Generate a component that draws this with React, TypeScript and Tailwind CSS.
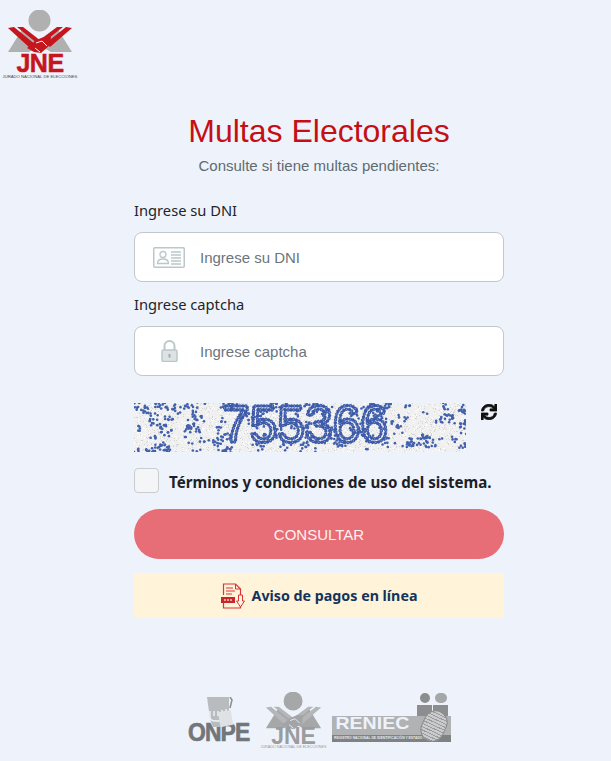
import { FaSync } from "react-icons/fa";

// small seeded random so the captcha noise stays the same on every render
function makeRandom(seed: number) {
    let s = seed;
    return () => {
        s = (s * 16807) % 2147483647;
        return s / 2147483647;
    };
}

const rand = makeRandom(4217);

const grain = Array.from({ length: 2600 }, () => ({
    x: Math.floor(rand() * 332),
    y: Math.floor(rand() * 49),
    shade: rand() > 0.5 ? "#d4d4d4" : "#ffffff",
}));

const noise = Array.from({ length: 150 }, () => {
    const cx = rand() * 332;
    const cy = rand() * 49;
    return Array.from({ length: 2 + Math.floor(rand() * 6) }, () => ({
        x: cx + (rand() - 0.5) * 9,
        y: cy + (rand() - 0.5) * 7,
    }));
}).flat();

function IdCardIcon() {
    return (
        <svg width="32" height="21" viewBox="0 0 32 21" fill="none" stroke="#bcc7c9">
            <rect x="0.75" y="0.75" width="30.5" height="19.5" rx="1" strokeWidth="1.5" />
            <circle cx="10" cy="7.5" r="3" strokeWidth="1.3" />
            <path d="M4.5 16.5c0-3.2 2.4-4.5 5.5-4.5s5.5 1.3 5.5 4.5z" strokeWidth="1.3" />
            <path d="M18 5h10M18 8h10M18 11h10M18 14h10M18 17h10" strokeWidth="1.3" />
        </svg>
    );
}

function LockIcon() {
    return (
        <svg width="17" height="22" viewBox="0 0 17 22" fill="none">
            <path d="M3.5 10V6a5 5 0 0 1 10 0v4" stroke="#bcc7c9" strokeWidth="2" />
            <rect x="1" y="10" width="15" height="11.5" rx="1.5" stroke="#bcc7c9" strokeWidth="1.5" fill="#dde3e4" />
            <rect x="7.5" y="14" width="2" height="3.5" fill="#9fabad" />
        </svg>
    );
}

function PdfIcon() {
    return (
        <svg width="24" height="26" viewBox="0 0 24 26" fill="none" stroke="#d9353a">
            <path d="M2.5 12V1h12l5 5v7M2.5 20v5h17v-2" strokeWidth="1.2" />
            <path d="M14.5 1v5h5" strokeWidth="1" />
            <path d="M5 5h7M5 8h9M5 11h6" strokeWidth="1" />
            <rect x="0" y="14" width="14" height="6" fill="#c9252b" stroke="none" />
            <path d="M3 17h8" stroke="#f6c9b8" strokeWidth="1.6" strokeDasharray="2 1" />
            <path d="M17.5 12h4v6h2l-4 6-4-6h2z" fill="#fff3d9" strokeWidth="1" />
        </svg>
    );
}

function JneMark({ width, band, hand, body }: { width: number; band: string; hand: string; body: string }) {
    return (
        <svg width={width} height={(width * 44) / 66} viewBox="0 0 66 44">
            <circle cx="32.5" cy="10.5" r="11" fill={body} />
            <path d="M1 42 L16 18 L33 33 L50 18 L65 42 L44 42 L33 36 L22 42 Z" fill={body} />
            <path d="M1 18 L7 17 L29 35 L24 39 Z" fill={band} />
            <path d="M65 18 L59 17 L39 33 L43 37 Z" fill={band} />
            <path d="M10 17 L16 17 L34 31 L31 34 Z" fill={band} />
            <path d="M56 17 L50 17 L34 29 L37 32 Z" fill={band} />
            <path d="M20 38 L29 30 L37 27 L44 27 L43 35 L34 43 L27 42 Z" fill={hand} />
            <path d="M29 33 L35 31 L40 36 M28 38 L33 42" stroke="#eef3fb" strokeWidth="1" fill="none" />
        </svg>
    );
}

function OnpeLogo() {
    return (
        <div className="flex flex-col w-[62px] pt-[5px]">
            <svg width="27" height="30" viewBox="0 0 27 30" className="ml-[19px] -mb-[5px] z-10">
                <path d="M0 0h22v22l-6 8H6l-3-8z" fill="#b9bcbe" />
                <path d="M3 14v6c0 3 2 4 6 4h6M7 14v5M11 14v5M15 13v5M19 12v6" stroke="#eef3fb" strokeWidth="1.4" fill="none" />
                <rect x="12" y="14" width="13" height="15" fill="#dfe2e5" transform="rotate(-10 18 21)" />
                <path d="M23 0l2 3-2 8" stroke="#8f9294" strokeWidth="1.6" fill="none" />
            </svg>
            <span className="font-['Liberation_Sans',sans-serif] font-bold text-[26px] leading-[20px] text-[#737679] tracking-[-1px] whitespace-nowrap scale-x-[0.88] origin-left [-webkit-text-stroke:0.7px_#737679]">
                ONPE
            </span>
        </div>
    );
}

function ReniecLogo() {
    return (
        <div className="relative w-[119px] h-[50px] mt-[1px]">
            <div className="absolute top-0 right-[3px] flex gap-[1px] items-start">
                <div className="flex flex-col items-center gap-[2px] w-[15px]">
                    <div className="w-[10px] h-[10px] rounded-full bg-[#8b8d8f]" />
                    <div className="w-[15px] h-[20px] bg-[#8b8d8f]" />
                </div>
                <div className="flex flex-col items-center gap-[2px] w-[15px]">
                    <div className="w-[12px] h-[10px] rounded-full bg-[#a5a7a9]" />
                    <div className="w-[15px] h-[20px] bg-[#8b8d8f]" />
                </div>
            </div>
            <div className="absolute left-0 right-0 top-[23px] h-[26px] bg-[#b0b2b4] flex flex-col">
                <span className="font-['Liberation_Sans',sans-serif] font-bold text-[17px] leading-[16px] text-[#eef3fb] pl-[3px] w-fit scale-x-[1.15] origin-left">
                    RENIEC
                </span>
                <span className="bg-[#7f8183] font-['Liberation_Sans',sans-serif] font-bold text-[3.4px] leading-[7px] text-[#e8eaec] pl-[2px] whitespace-nowrap mt-auto">
                    REGISTRO NACIONAL DE IDENTIFICACIÓN Y ESTADO CIVIL
                </span>
            </div>
            <div className="absolute right-[5px] top-[17px] w-[24px] h-[32px] rounded-full bg-[#c9cbcd] border border-[#8b8d8f] rotate-[25deg] [background-image:repeating-linear-gradient(0deg,#9a9c9e_0,#9a9c9e_1px,transparent_1px,transparent_3px)]" />
        </div>
    );
}

export default function App() {
    return (
        <div className="relative w-full h-[761px] overflow-hidden bg-[#eef3fb] font-['Noto_Sans',sans-serif]">
            {/* header logo */}
            <header className="pl-[7px] pt-[10px] h-[82px]">
                <JneMark width={66} band="#c5161d" hand="#c5161d" body="#b0b0b0" />
                <div className="flex flex-col items-center w-[66px]">
                    <span className="font-['Liberation_Sans',sans-serif] font-bold text-[25px] leading-[19px] text-[#c5161d] tracking-[-0.5px] [-webkit-text-stroke:0.5px_#c5161d]">
                        JNE
                    </span>
                    <span className="font-['Liberation_Sans',sans-serif] text-[4.2px] leading-[5px] text-[#444] whitespace-nowrap mt-[1px]">
                        JURADO NACIONAL DE ELECCIONES
                    </span>
                </div>
            </header>

            <main className="ml-[134px] w-[370px] flex flex-col">
                <div className="h-[30px]" />
                <h1 className="font-['Liberation_Sans',sans-serif] text-[32px] leading-[38px] text-[#c40f17] text-center">
                    Multas Electorales
                </h1>
                <p className="font-['Liberation_Sans',sans-serif] text-[15px] leading-[20px] text-[#5f6b70] text-center mt-[6px]">
                    Consulte si tiene multas pendientes:
                </p>

                <label className="text-[14.7px] leading-[20px] text-[#212529] mt-[24px]">Ingrese su DNI</label>
                <div className="mt-[12px] h-[50px] rounded-[8px] border border-[#bfc8cc] bg-white flex items-center">
                    <div className="w-[65px] pl-[18px] shrink-0">
                        <IdCardIcon />
                    </div>
                    <span className="font-['Liberation_Sans',sans-serif] text-[15px] text-[#6c757d] pt-[2px]">Ingrese su DNI</span>
                </div>

                <label className="text-[14.7px] leading-[20px] text-[#212529] mt-[12px]">Ingrese captcha</label>
                <div className="mt-[12px] h-[50px] rounded-[8px] border border-[#bfc8cc] bg-white flex items-center">
                    <div className="w-[65px] pl-[26px] shrink-0">
                        <LockIcon />
                    </div>
                    <span className="font-['Liberation_Sans',sans-serif] text-[15px] text-[#6c757d] pt-[2px]">Ingrese captcha</span>
                </div>

                <div className="mt-[27px] flex items-start">
                    <svg width="332" height="49" viewBox="0 0 332 49" className="bg-[#f0f0f0]">
                        {grain.map((g, i) => (
                            <rect key={i} x={g.x} y={g.y} width="1" height="1" fill={g.shade} />
                        ))}
                        {noise.map((n, i) => (
                            <circle key={i} cx={n.x} cy={n.y} r="1.3" fill="#4160ad" />
                        ))}
                        <text
                            x="88"
                            y="39"
                            textLength="166"
                            lengthAdjust="spacingAndGlyphs"
                            fontFamily="Liberation Sans, sans-serif"
                            fontSize="52"
                            fill="none"
                            stroke="#3d5aa8"
                            strokeWidth="3.6"
                            strokeLinecap="round"
                            strokeDasharray="0 3"
                        >
                            755366
                        </text>
                        <text
                            x="88"
                            y="39"
                            textLength="166"
                            lengthAdjust="spacingAndGlyphs"
                            fontFamily="Liberation Sans, sans-serif"
                            fontSize="52"
                            fill="none"
                            stroke="#86a6e0"
                            strokeWidth="1.2"
                            strokeLinecap="round"
                            strokeDasharray="0 6"
                        >
                            755366
                        </text>
                    </svg>
                    <FaSync className="ml-[15px] mt-[1px] text-[16px] text-[#111] [stroke-width:25]" />
                </div>

                <div className="mt-[16px] flex items-center h-[25px]">
                    <span className="w-[25px] h-[25px] rounded-[4px] border border-[#c9cdd0] bg-[#f3f5f7] shrink-0" />
                    <span className="ml-[10px] text-[15.1px] leading-[24px] font-bold text-[#1c2128] whitespace-nowrap pt-[2px]">
                        Términos y condiciones de uso del sistema.
                    </span>
                </div>

                <button className="mt-[16px] h-[50px] pt-[2px] rounded-full bg-[#e76d76] font-['Liberation_Sans',sans-serif] text-[15px] text-[#fff1f1]">
                    CONSULTAR
                </button>

                <div className="mt-[14px] h-[45px] bg-[#fff3d9] flex items-center justify-center gap-[7px]">
                    <PdfIcon />
                    <span className="text-[14.25px] font-bold text-[#14335c]">Aviso de pagos en línea</span>
                </div>
            </main>

            {/* partner logos */}
            <footer className="mt-[74px] ml-[188px] flex items-start">
                <OnpeLogo />
                <div className="flex flex-col items-center w-[57px] ml-[15px]">
                    <JneMark width={57} band="#b4b6b8" hand="#a2a4a6" body="#a5a7a9" />
                    <span className="-mt-[3px] font-['Liberation_Sans',sans-serif] font-bold text-[23px] leading-[18px] text-[#9a9c9e]">
                        JNE
                    </span>
                    <span className="font-['Liberation_Sans',sans-serif] text-[3.7px] leading-[5px] text-[#999] whitespace-nowrap">
                        JURADO NACIONAL DE ELECCIONES
                    </span>
                </div>
                <div className="ml-[10px]">
                    <ReniecLogo />
                </div>
            </footer>
        </div>
    );
}
